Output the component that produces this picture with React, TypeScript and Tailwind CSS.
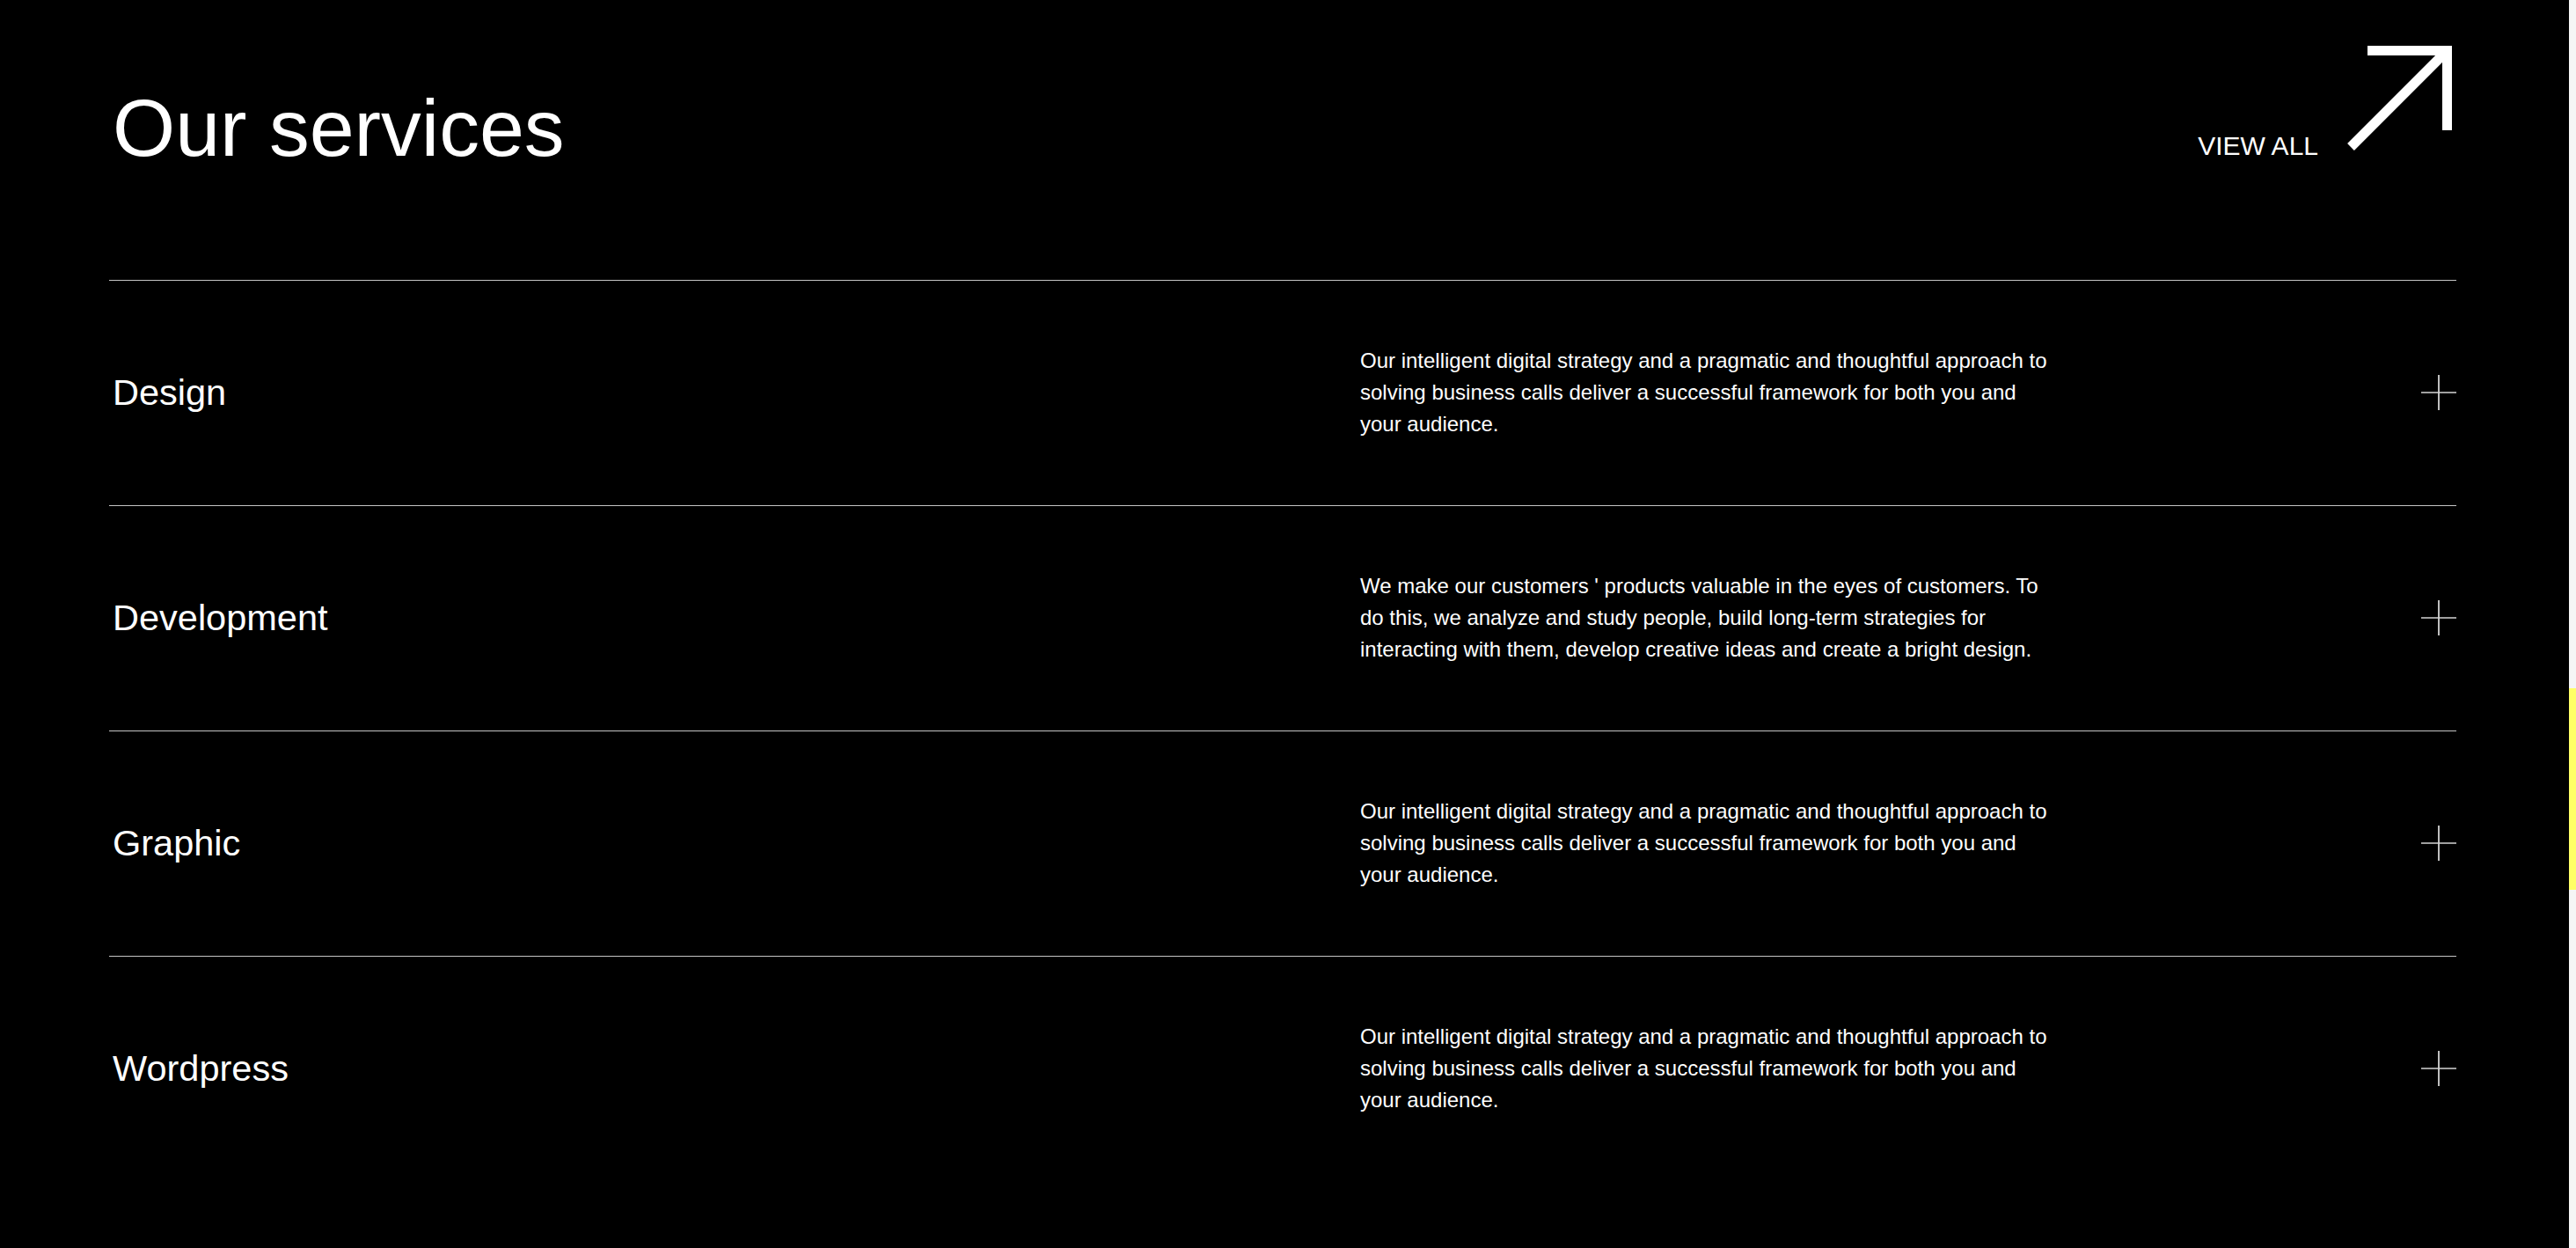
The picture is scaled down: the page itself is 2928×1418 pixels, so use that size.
import React from 'react';

const services = [
  {
    title: 'Design',
    text: 'Our intelligent digital strategy and a pragmatic and thoughtful approach to solving business calls deliver a successful framework for both you and your audience.',
  },
  {
    title: 'Development',
    text: "We make our customers ' products valuable in the eyes of customers. To do this, we analyze and study people, build long-term strategies for interacting with them, develop creative ideas and create a bright design.",
  },
  {
    title: 'Graphic',
    text: 'Our intelligent digital strategy and a pragmatic and thoughtful approach to solving business calls deliver a successful framework for both you and your audience.',
  },
  {
    title: 'Wordpress',
    text: 'Our intelligent digital strategy and a pragmatic and thoughtful approach to solving business calls deliver a successful framework for both you and your audience.',
  },
];

function ArrowUpRight() {
  return (
    <svg width="124" height="120" viewBox="0 0 124 120" fill="none" className="block">
      <polyline points="23,5.5 113.5,5.5 113.5,96" stroke="white" strokeWidth="11" strokeLinejoin="miter" />
      <line x1="4" y1="115" x2="112" y2="7" stroke="white" strokeWidth="11" />
    </svg>
  );
}

function Plus() {
  return (
    <svg width="40" height="40" viewBox="0 0 40 40" className="block">
      <line x1="20" y1="0" x2="20" y2="40" stroke="white" strokeWidth="1.5" />
      <line x1="0" y1="20" x2="40" y2="20" stroke="#d4d4d4" strokeWidth="1.5" />
    </svg>
  );
}

export default function App() {
  return (
    <div className="flex min-h-screen bg-black text-white font-['Liberation_Sans',Arial,sans-serif]">
      <main className="flex-1 pl-[124px] pr-[128px]">
        {/* Header */}
        <header className="flex justify-between items-start pt-[52px]">
          <h2 className="mt-[48px] pl-[4px] text-[91.5px] leading-none font-normal">
            Our services
          </h2>
          <a href="#" className="flex items-start">
            <span className="mt-[99px] text-[30px] leading-none">VIEW ALL</span>
            <span className="ml-[33px]">
              <ArrowUpRight />
            </span>
          </a>
        </header>

        {/* Service rows */}
        <div className="mt-[126px]">
          {services.map((s) => (
            <div key={s.title} className="flex items-center h-[256px] border-t border-[#c4c4c4]">
              <h3 className="w-[1422px] shrink-0 pl-[4px] text-[41.5px] leading-none font-normal">{s.title}</h3>
              <p className="w-[790px] text-[24px] leading-[1.5]">{s.text}</p>
              <div className="ml-auto">
                <Plus />
              </div>
            </div>
          ))}
        </div>
      </main>

      {/* Scrollbar */}
      <div className="w-2 shrink-0 bg-[#f5f5f5] pt-[782px]">
        <div className="h-[229px] bg-[#ffff66]"></div>
      </div>
    </div>
  );
}
